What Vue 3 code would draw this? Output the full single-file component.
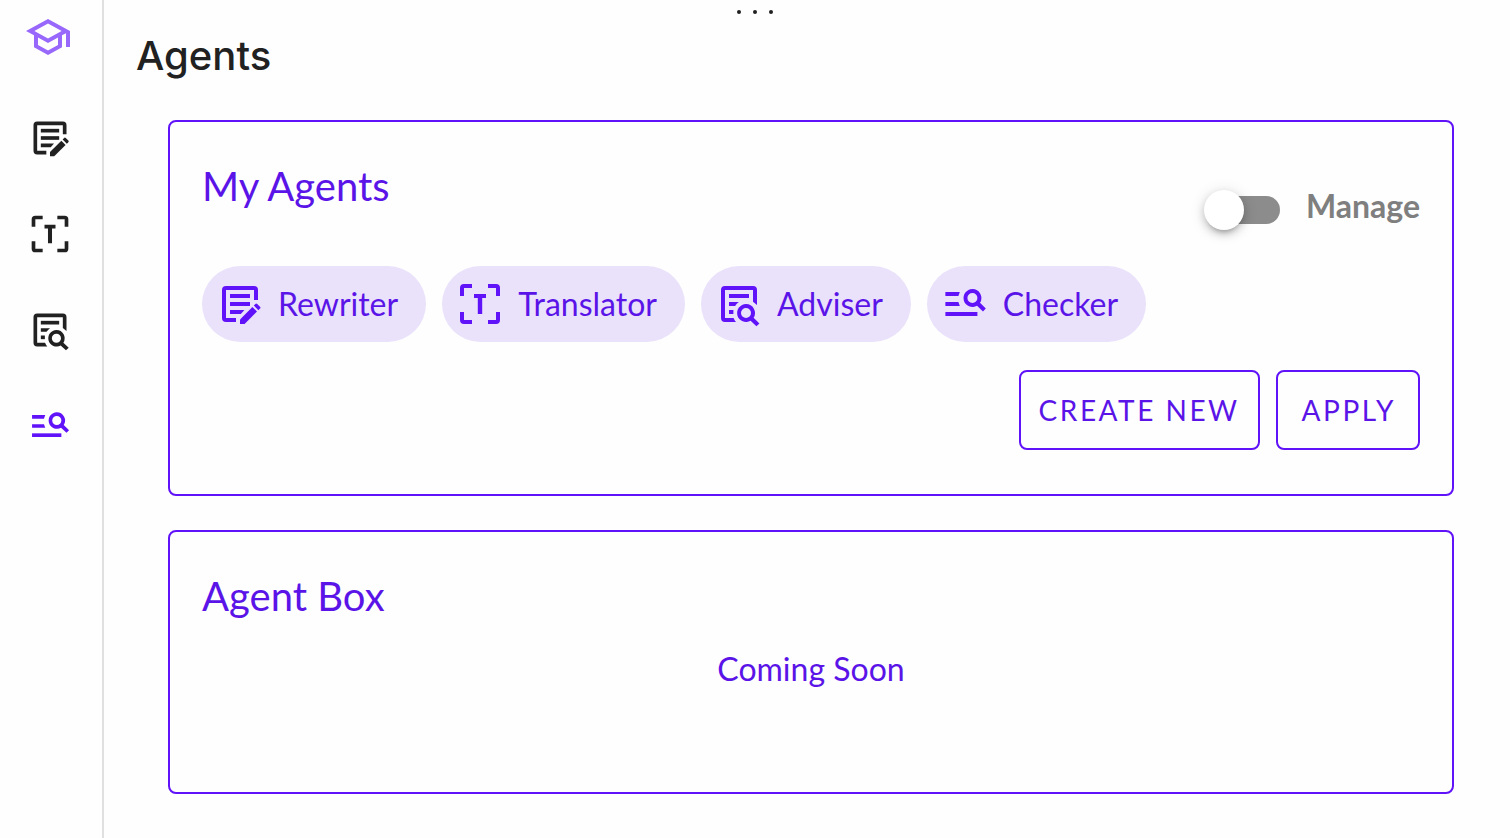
<script setup>
import { ref } from 'vue'

const manage = ref(false)
const active = ref('checker')

const icons = {
  rewriter: [
    'M5 3h14a2 2 0 0 1 2 2v5h-2V5H5v14h5v2H5a2 2 0 0 1-2-2V5a2 2 0 0 1 2-2z',
    'M7 7h10v2H7z',
    'M7 11h10v2H7z',
    'M7 15h7.2l-1.800 2H7z',
    'M12 22v-2.300l6.200-6.200 2.300 2.300-6.200 6.200z',
    'M18.9 12.8l.8-.8a.6.6 0 0 1 .9 0l1.400 1.400a.6.6 0 0 1 0 .9l-.8.8z'
  ],
  translator: [
    'M4 2h4v2H4v4H2V4a2 2 0 0 1 2-2z',
    'M16 2h4a2 2 0 0 1 2 2v4h-2V4h-4z',
    'M2 16h2v4h4v2H4a2 2 0 0 1-2-2z',
    'M20 16h2v4a2 2 0 0 1-2 2h-4v-2h4z',
    'M9 7h6v2h-1.900v8h-2.200V9H9z'
  ],
  adviser: [
    'M5 3h14a2 2 0 0 1 2 2v7.5l-2-1.6V5H5v14h4.3c.3.8.7 1.4 1.2 2H5a2 2 0 0 1-2-2V5a2 2 0 0 1 2-2z',
    'M7 7h10v2H7z',
    'M7 11h5c-.8.5-1.400 1.200-1.900 2H7z',
    'M7 15h2.200v2H7z',
    'M15.500 12a4.500 4.500 0 1 0 2.300 8.400l2.900 2.700 1.500-1.400-2.900-2.800A4.500 4.500 0 0 0 15.500 12zm0 2a2.500 2.500 0 1 1 0 5 2.500 2.500 0 0 1 0-5z'
  ],
  checker: [
    'M2.200 6h7.200l-.7 2H2.200z',
    'M2.200 11h6.500l.7 2H2.200z',
    'M2.200 16h16v2h-16z',
    'M15.700 4.500a4.500 4.500 0 1 0 2.300 8.400l3 2.800 1.400-1.400-2.900-2.900A4.500 4.500 0 0 0 15.700 4.500zm0 2a2.500 2.500 0 1 1 0 5 2.500 2.500 0 0 1 0-5z'
  ]
}

const agents = [
  { id: 'rewriter', label: 'Rewriter' },
  { id: 'translator', label: 'Translator' },
  { id: 'adviser', label: 'Adviser' },
  { id: 'checker', label: 'Checker' }
]
</script>

<template>
  <div class="app">
    <aside class="sidebar">
      <a class="logo" href="#" aria-label="Home">
        <svg viewBox="0 0 24 24" aria-hidden="true">
          <path d="M12 3L1 9l4 2.18v6L12 21l7-3.820v-6l2-1.090V17h2V9L12 3zm6.820 6L12 12.720 5.180 9 12 5.280 18.820 9zM17 15.990l-5 2.730-5-2.730v-3.720L12 15l5-2.730v3.720z" />
        </svg>
      </a>
      <nav class="nav" aria-label="Agents">
        <button
          v-for="agent in agents"
          :key="agent.id"
          type="button"
          class="nav-item"
          :class="{ active: active === agent.id }"
          :aria-label="agent.label"
          @click="active = agent.id"
        >
          <svg viewBox="0 0 24 24" aria-hidden="true">
            <path v-for="d in icons[agent.id]" :key="d" :d="d" />
          </svg>
        </button>
      </nav>
    </aside>

    <button type="button" class="handle" aria-label="Window options">
      <span class="dot"></span><span class="dot"></span><span class="dot"></span>
    </button>

    <main class="main">
      <h1 class="page-title">Agents</h1>

      <section class="card">
        <header class="card-head">
          <h2 class="card-title">My Agents</h2>
          <label class="manage">
            <input v-model="manage" type="checkbox" role="switch" class="switch" />
            <span>Manage</span>
          </label>
        </header>
        <div class="chips">
          <button v-for="agent in agents" :key="agent.id" type="button" class="chip">
            <svg viewBox="0 0 24 24" aria-hidden="true">
              <path v-for="d in icons[agent.id]" :key="d" :d="d" />
            </svg>
            <span>{{ agent.label }}</span>
          </button>
        </div>
        <div class="actions">
          <button type="button" class="action">CREATE NEW</button>
          <button type="button" class="action apply">APPLY</button>
        </div>
      </section>

      <section class="card box">
        <h2 class="card-title">Agent Box</h2>
        <p class="soon">Coming Soon</p>
      </section>
    </main>
  </div>
</template>

<style>
body {
  margin: 0;
  background: #fefefe;
}
</style>

<style scoped>
.app {
  position: relative;
  display: flex;
  min-height: 100vh;
  font-family: Lato, "Liberation Sans", sans-serif;
  color: #5b14e8;
}

button {
  font: inherit;
  color: inherit;
  background: none;
  border: 0;
  padding: 0;
  cursor: pointer;
}

svg {
  display: block;
  fill: currentColor;
}

.sidebar {
  flex: none;
  box-sizing: border-box;
  width: 104px;
  padding: 13px 6px 0 0;
  border-right: 2px solid #e0e0e0;
  display: flex;
  flex-direction: column;
  align-items: center;
  gap: 55px;
}

.logo {
  color: #9867fb;
}

.logo svg {
  width: 48px;
  height: 48px;
}

.nav {
  display: flex;
  flex-direction: column;
  gap: 52px;
  padding-left: 4px;
}

.nav-item {
  color: #212121;
}

.nav-item.active {
  color: #6012f8;
}

.nav-item svg {
  width: 44px;
  height: 44px;
}

.handle {
  position: absolute;
  top: 10px;
  left: 50%;
  transform: translateX(-50%);
  display: flex;
  gap: 12px;
}

.dot {
  width: 4px;
  height: 4px;
  border-radius: 50%;
  background: #212121;
}

.main {
  flex: 1;
  min-width: 0;
  padding: 24px 56px 44px 32px;
}

.page-title {
  margin: 0 0 32px;
  font: 500 40px/64px Inter, "Liberation Sans", sans-serif;
  color: #212121;
}

.card {
  margin: 0 0 34px 32px;
  padding: 32px 32px 44px;
  border: 2px solid #6012f8;
  border-radius: 8px;
}

.card.box {
  margin-bottom: 0;
  padding-bottom: 102px;
}

.card-head {
  display: flex;
  justify-content: space-between;
  margin-bottom: 48px;
}

.card-title {
  margin: 0;
  font-size: 40px;
  font-weight: 400;
  line-height: 64px;
}

.manage {
  display: flex;
  height: 40px;
  margin-top: 36px;
  margin-bottom: -12px;
  gap: 26px;
  font-size: 32px;
  font-weight: 700;
  line-height: 32px;
  color: #7f7f7f;
}

.switch {
  appearance: none;
  position: relative;
  width: 76px;
  height: 40px;
  margin: 0;
  cursor: pointer;
}

.switch::before {
  content: "";
  position: absolute;
  inset: 6px 0 6px 4px;
  border-radius: 14px;
  background: #8c8c8c;
}

.switch::after {
  content: "";
  position: absolute;
  top: 0;
  left: 0;
  width: 40px;
  height: 40px;
  border-radius: 50%;
  background: #fff;
  box-shadow: 0 6px 4px -4px rgba(0, 0, 0, 0.2), 0 4px 8px rgba(0, 0, 0, 0.18), 0 2px 16px rgba(0, 0, 0, 0.12);
}

.switch:checked::before {
  background: #b08bfb;
}

.switch:checked::after {
  left: 36px;
  background: #6012f8;
}

.chips {
  display: flex;
  flex-wrap: wrap;
  gap: 16px;
}

.chip {
  display: flex;
  align-items: center;
  gap: 14px;
  height: 76px;
  padding: 0 28px 0 14px;
  border-radius: 38px;
  background: #eae2fb;
  font-size: 32px;
  line-height: 40px;
}

.chip svg {
  width: 48px;
  height: 48px;
  color: #6012f8;
}

.actions {
  display: flex;
  justify-content: flex-end;
  gap: 16px;
  margin-top: 28px;
}

.action {
  height: 80px;
  padding: 0 18px;
  border: 2px solid #6012f8;
  border-radius: 8px;
  font-size: 28px;
  letter-spacing: 0.09em;
}

.action.apply {
  padding: 0 22px 0 24px;
}

.soon {
  margin: 20px 0 0;
  font-size: 32px;
  line-height: 42px;
  text-align: center;
}
</style>
